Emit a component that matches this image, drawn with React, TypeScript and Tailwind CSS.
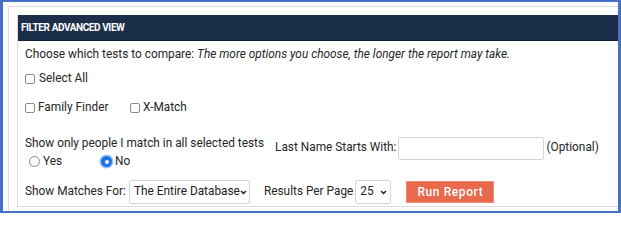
import React from "react";

const font = { fontFamily: "Roboto, 'Liberation Sans', sans-serif" };

function Box() {
  return (
    <span className="inline-block w-[10px] h-[10px] rounded-[2px] border border-[#8a8a8a] bg-white shrink-0" />
  );
}

function Radio({ checked }: { checked?: boolean }) {
  if (checked) {
    return (
      <span className="inline-flex items-center justify-center w-[11px] h-[11px] rounded-full bg-[#1a73e8] ring-[1.5px] ring-[#9cc3f7] shrink-0">
        <span className="w-[4px] h-[4px] rounded-full bg-white" />
      </span>
    );
  }
  return (
    <span className="inline-block w-[11px] h-[11px] rounded-full border border-[#8a8a8a] bg-white shrink-0" />
  );
}

function Chevron() {
  return (
    <svg width="7" height="5" viewBox="0 0 7 5" className="shrink-0">
      <path d="M1 1 L3.5 3.5 L6 1" fill="none" stroke="#222" strokeWidth="1.5" />
    </svg>
  );
}

function FakeSelect({ value, width }: { value: string; width: string }) {
  return (
    <div
      className={`flex items-center justify-between h-[24px] pl-[4px] pr-[3px] border border-[#d6d6d6] rounded-[2px] bg-white text-[11.85px] text-[#222] whitespace-nowrap shrink-0 ${width}`}
    >
      <span>{value}</span>
      <Chevron />
    </div>
  );
}

export default function App() {
  return (
    <div
      className="w-[621px] h-[213px] overflow-hidden bg-white border-[#4472c4] border-l-[3px] border-r-[3px] border-t-2 border-b-2"
      style={font}
    >
      <div className="h-full pl-[5px] pt-[4px]">
        <div className="h-full border-l border-t border-[#dcdcdc] pl-[8px] pt-[8px]">
          <div className="w-[640px] border-l border-b border-[#dcdcdc] text-[#262626] text-[11.85px] whitespace-nowrap">
            <div className="h-[26px] bg-[#1c2f4a] border-b border-[#14233a] flex items-center pl-[3px]">
              <span className="text-white font-bold text-[10px] tracking-[-0.4px]">FILTER ADVANCED VIEW</span>
            </div>

            <div className="pl-[7px] pt-[5px] pb-[2px]">
              <div className="h-[18px] flex items-center">
                Choose which tests to compare:&nbsp;
                <span className="italic">The more options you choose, the longer the report may take.</span>
              </div>

              <label className="mt-[6px] h-[18px] flex items-center gap-[4px]">
                <Box />
                <span>Select All</span>
              </label>

              <div className="mt-[11px] h-[18px] flex items-center">
                <label className="flex items-center gap-[3px] w-[105px]">
                  <Box />
                  <span>Family Finder</span>
                </label>
                <label className="flex items-center gap-[3px]">
                  <Box />
                  <span>X-Match</span>
                </label>
              </div>

              <div className="mt-[18px] flex">
                <div className="w-[250px]">
                  <div className="h-[18px] flex items-center">Show only people I match in all selected tests</div>
                  <div className="h-[18px] flex items-center pl-[4px]">
                    <label className="flex items-center gap-[3px] w-[72px]">
                      <Radio />
                      <span>Yes</span>
                    </label>
                    <label className="flex items-center gap-[3px]">
                      <Radio checked />
                      <span>No</span>
                    </label>
                  </div>
                </div>
                <div className="flex items-center h-[24px] mt-[1px] gap-[2px]">
                  <span>Last Name Starts With:</span>
                  <div className="w-[146px] h-[23px] border border-[#d6d6d6] rounded-[2px] bg-white" />
                  <span>(Optional)</span>
                </div>
              </div>

              <div className="mt-[9px] h-[24px] flex items-center">
                <span className="mr-[3px]">Show Matches For:</span>
                <FakeSelect value="The Entire Database" width="w-[121px]" />
                <span className="ml-[14px] mr-[2px]">Results Per Page</span>
                <FakeSelect value="25" width="w-[36px]" />
                <button className="ml-[15px] w-[88px] h-[22px] bg-[#e8694d] border border-[#f08a70] text-white text-[12px] font-medium tracking-[0.6px]">
                  Run Report
                </button>
              </div>
            </div>
          </div>
        </div>
      </div>
    </div>
  );
}
